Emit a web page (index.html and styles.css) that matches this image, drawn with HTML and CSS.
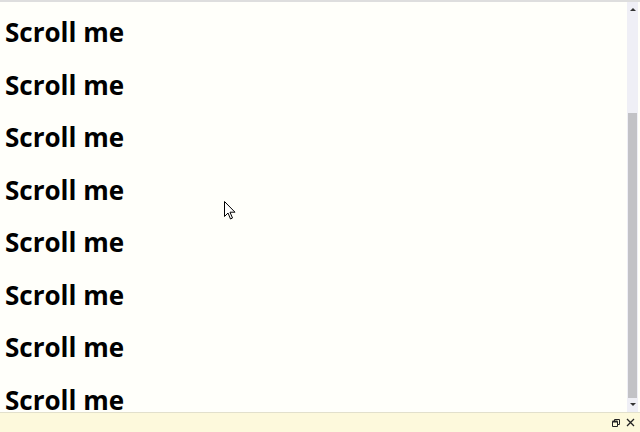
FILE: index.html
```html
<!DOCTYPE html>
<html>
<head>
<meta charset="utf-8">
<link rel="stylesheet" href="styles.css">
</head>
<body>
<div class="window">
  <div class="viewport">
    <div class="content">
      <h2 class="item">Scroll me</h2>
      <h2 class="item">Scroll me</h2>
      <h2 class="item">Scroll me</h2>
      <h2 class="item">Scroll me</h2>
      <h2 class="item">Scroll me</h2>
      <h2 class="item">Scroll me</h2>
      <h2 class="item">Scroll me</h2>
      <h2 class="item">Scroll me</h2>
    </div>
    <div class="scrollbar">
      <div class="arrow up"></div>
      <div class="track">
        <div class="thumb"></div>
      </div>
      <div class="arrow down"></div>
    </div>
  </div>
  <div class="statusbar">
    <svg class="icon" width="9" height="9" viewBox="0 0 9 9"><path d="M0.5 3.5h5v5h-5z M2.5 3.5v-2h5v5h-2" fill="none" stroke="#222" stroke-width="1"/><path d="M0.5 3.5h5" stroke="#222" stroke-width="2"/></svg>
    <svg class="icon" width="9" height="9" viewBox="0 0 9 9"><path d="M1 1l7 7M8 1l-7 7" stroke="#222" stroke-width="1.3"/></svg>
  </div>
</div>
<svg class="cursor" width="12" height="20" viewBox="0 0 12 20"><path d="M0.5 0.5v15l3.5-3.5 2.5 6 2-1-2.5-5.8h5z" fill="#fff" stroke="#000" stroke-width="1"/></svg>
</body>
</html>
```
FILE: styles.css
```css
html, body {
  margin: 0;
  padding: 0;
  width: 640px;
  height: 432px;
  overflow: hidden;
  background: #fffffa;
}
.window {
  display: flex;
  flex-direction: column;
  width: 640px;
  height: 432px;
}
.viewport {
  flex: 0 0 412px;
  display: flex;
  border-top: 2px solid #dedede;
  box-sizing: border-box;
}
.content {
  flex: 1;
  display: flex;
  flex-direction: column;
  gap: 28.5px;
  padding: 18px 0 0 5px;
}
.item {
  margin: 0;
  font: 700 26px/24px "Open Sans", "Noto Sans", sans-serif;
  color: #000;
  letter-spacing: 0;
}
.scrollbar {
  width: 11px;
  margin-right: 2px;
  background: #efeff6;
  display: flex;
  flex-direction: column;
}
.arrow {
  height: 14px;
  position: relative;
}
.arrow::after {
  content: "";
  position: absolute;
  left: 3px;
  border-left: 3px solid transparent;
  border-right: 3px solid transparent;
}
.arrow.up::after {
  top: 6px;
  border-bottom: 3px solid #333;
}
.arrow.down::after {
  top: 5px;
  border-top: 3px solid #333;
}
.track {
  flex: 1;
  display: flex;
  flex-direction: column;
  justify-content: flex-end;
}
.thumb {
  height: 285px;
  background: #c2c2c6;
  margin: 0 1px;
}
.statusbar {
  flex: 0 0 20px;
  background: #fdf9dc;
  border-top: 1px solid #e2e0cc;
  box-sizing: border-box;
  display: flex;
  justify-content: flex-end;
  align-items: center;
  gap: 5px;
  padding-right: 5px;
}
.icon {
  display: block;
}
.cursor {
  position: absolute;
  left: 224px;
  top: 201px;
}
```
